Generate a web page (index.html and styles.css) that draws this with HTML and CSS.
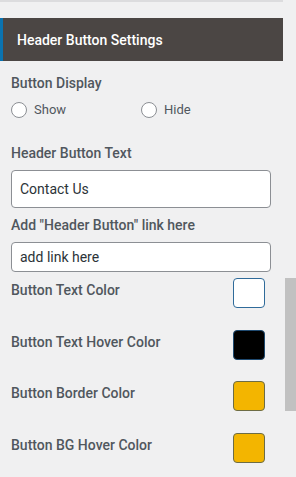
FILE: index.html
```html
<!DOCTYPE html>
<html>
<head>
<meta charset="utf-8">
<link rel="stylesheet" href="styles.css">
</head>
<body>
<div class="panel">
  <div class="topline"></div>
  <div class="header">Header Button Settings</div>
  <div class="content">
    <div class="label first">Button Display</div>
    <div class="radios">
      <label class="radio"><span class="circle"></span><span class="rtext">Show</span></label>
      <label class="radio"><span class="circle"></span><span class="rtext">Hide</span></label>
    </div>
    <div class="label gap-big">Header Button Text</div>
    <input class="field tall" type="text" value="Contact Us">
    <div class="label gap-small">Add "Header Button" link here</div>
    <input class="field short" type="text" value="add link here">
    <div class="colors">
      <div class="crow"><span class="clabel">Button Text Color</span><span class="swatch white"></span></div>
      <div class="crow"><span class="clabel">Button Text Hover Color</span><span class="swatch black"></span></div>
      <div class="crow"><span class="clabel">Button Border Color</span><span class="swatch yellow"></span></div>
      <div class="crow"><span class="clabel">Button BG Hover Color</span><span class="swatch yellow"></span></div>
    </div>
  </div>
</div>
<div class="scrollbar"></div>
</body>
</html>
```

FILE: styles.css
```css
html, body {
  margin: 0;
  padding: 0;
  background: #f0f0f1;
  font-family: Roboto, "Liberation Sans", sans-serif;
  overflow: hidden;
}

.panel {
  width: 283px;
}

.topline {
  height: 2px;
  background: #dcdcde;
}

.header {
  margin-top: 16px;
  height: 43px;
  box-sizing: border-box;
  border-left: 3px solid #0a73b0;
  background: #4b4644;
  color: #ffffff;
  font-size: 14px;
  font-weight: 500;
  padding-left: 14px;
  display: flex;
  align-items: center;
}

.content {
  padding: 0 12px 0 11px;
  display: flex;
  flex-direction: column;
}

.label {
  font-size: 14px;
  font-weight: 500;
  line-height: 16px;
  color: #50575e;
}

.label.first {
  margin-top: 14px;
}

.label.gap-big {
  margin-top: 27px;
}

.label.gap-small {
  margin-top: 9px;
}

.radios {
  margin-top: 11px;
  display: flex;
  height: 16px;
}

.radio {
  display: flex;
  align-items: center;
  gap: 7px;
  width: 131px;
}

.circle {
  width: 16px;
  height: 16px;
  box-sizing: border-box;
  border: 1px solid #8c8f94;
  border-radius: 50%;
  background: #ffffff;
}

.rtext {
  font-size: 13px;
  color: #50575e;
  line-height: 16px;
}

.field {
  margin: 9px 0 0;
  width: 260px;
  box-sizing: border-box;
  border: 1px solid #8c8f94;
  border-radius: 4px;
  background: #ffffff;
  color: #2c3338;
  font-family: Roboto, "Liberation Sans", sans-serif;
  font-size: 14px;
  padding: 0 8px;
  outline: none;
}

.field.tall {
  height: 38px;
}

.field.short {
  height: 30px;
}

.colors {
  margin-top: 6px;
  display: flex;
  flex-direction: column;
  gap: 21.7px;
}

.crow {
  display: flex;
  justify-content: space-between;
  align-items: flex-start;
  height: 30px;
  padding-right: 6px;
}

.clabel {
  font-size: 14px;
  font-weight: 500;
  line-height: 16px;
  color: #50575e;
  padding-top: 4px;
}

.swatch {
  width: 32px;
  height: 30px;
  box-sizing: border-box;
  border-radius: 4px;
  border: 1px solid #2f6b9a;
}

.swatch.white {
  background: #ffffff;
}

.swatch.black {
  background: #000000;
  border-color: #1f4a70;
}

.swatch.yellow {
  background: #f3b500;
  border-color: #6d6c45;
}

.scrollbar {
  position: absolute;
  top: 278px;
  left: 285px;
  width: 11px;
  height: 133px;
  background: #c1c1c1;
}
```
